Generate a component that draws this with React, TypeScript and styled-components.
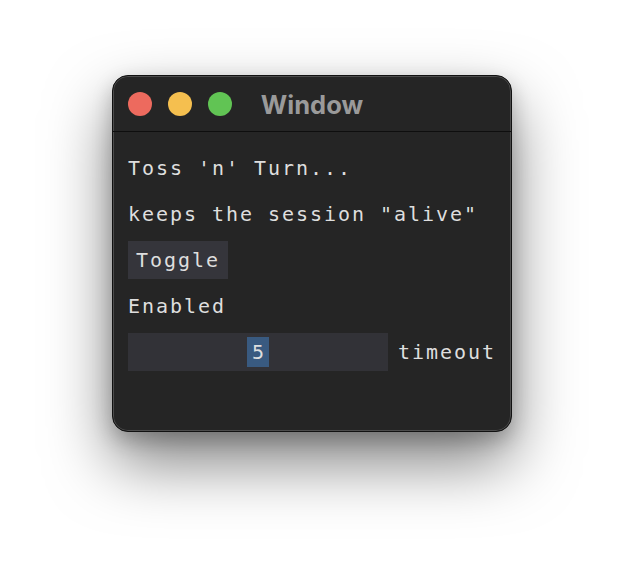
import React from "react";
import styled, { createGlobalStyle } from "styled-components";

const Global = createGlobalStyle`
  html, body { margin: 0; padding: 0; background: #ffffff; }
  body { width: 624px; height: 580px; overflow: hidden; }
`;

const Page = styled.div`
  padding: 75px 0 0 112px;
`;

const Window = styled.div`
  box-sizing: border-box;
  width: 400px;
  height: 357px;
  background: #252525;
  border: 1px solid #111111;
  border-radius: 16px;
  box-shadow: inset 0 0 0 1px #4c4c4c, 0 30px 64px rgba(0, 0, 0, 0.5),
    0 8px 20px rgba(0, 0, 0, 0.22);
  display: flex;
  flex-direction: column;
  overflow: hidden;
`;

const TitleBar = styled.div`
  height: 56px;
  box-sizing: border-box;
  border-bottom: 1px solid #0e0e0e;
  display: grid;
  grid-template-columns: 1fr auto 1fr;
  align-items: center;
  padding: 0 15px;
`;

const Lights = styled.div`
  display: flex;
  gap: 16px;
  align-items: center;
  padding-top: 1px;
`;

const Light = styled.span<{ $c: string }>`
  width: 24px;
  height: 24px;
  border-radius: 50%;
  background: ${(p) => p.$c};
`;

const Title = styled.div`
  font-family: Inter, "Open Sans", sans-serif;
  font-weight: 700;
  font-size: 25.5px;
  color: #9a9a9a;
  padding-top: 1px;
`;

const Content = styled.div`
  padding: 17px 15px;
  display: flex;
  flex-direction: column;
  gap: 8px;
  font-family: "DejaVu Sans Mono", monospace;
  font-size: 20px;
  letter-spacing: 1.96px;
  color: #dedede;
`;

const Row = styled.div`
  height: 38px;
  display: flex;
  align-items: center;
  gap: 10px;
  white-space: pre;
`;

const Button = styled.div`
  height: 38px;
  box-sizing: border-box;
  padding: 0 8px;
  display: flex;
  align-items: center;
  background: #35353b;
`;

const Input = styled.div`
  width: 260px;
  height: 38px;
  background: #323237;
  display: flex;
  align-items: center;
  justify-content: center;
`;

const Selected = styled.span`
  display: inline-flex;
  align-items: center;
  justify-content: center;
  width: 22px;
  height: 30px;
  letter-spacing: 0;
  background: #395a80;
`;

export default function App() {
  return (
    <>
      <Global />
      <Page>
        <Window>
          <TitleBar>
            <Lights>
              <Light $c="#ed6a5e" />
              <Light $c="#f5bf4f" />
              <Light $c="#61c454" />
            </Lights>
            <Title>Window</Title>
            <span />
          </TitleBar>
          <Content>
            <Row>Toss 'n' Turn...</Row>
            <Row>keeps the session "alive"</Row>
            <Row>
              <Button>Toggle</Button>
            </Row>
            <Row>Enabled</Row>
            <Row>
              <Input>
                <Selected>5</Selected>
              </Input>
              timeout
            </Row>
          </Content>
        </Window>
      </Page>
    </>
  );
}
